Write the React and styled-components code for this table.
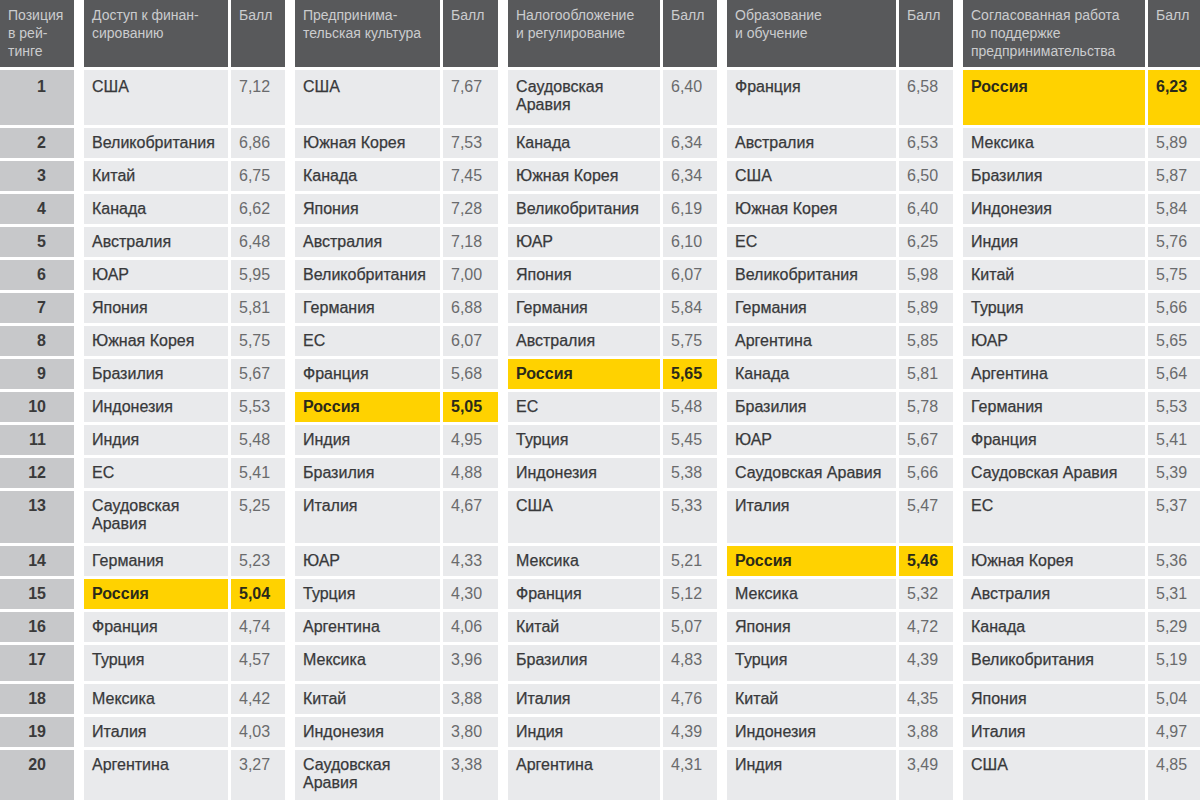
import React from "react";
import styled, { createGlobalStyle } from "styled-components";

const GlobalStyle = createGlobalStyle`
  html, body {
    margin: 0;
    padding: 0;
    background: #ffffff;
  }
  body {
    font-family: "Liberation Sans", Arial, sans-serif;
  }
`;

const groups = [
  {
    title: ["Доступ к финан-", "сированию"],
    rows: [
      ["США", "7,12"], ["Великобритания", "6,86"], ["Китай", "6,75"], ["Канада", "6,62"],
      ["Австралия", "6,48"], ["ЮАР", "5,95"], ["Япония", "5,81"], ["Южная Корея", "5,75"],
      ["Бразилия", "5,67"], ["Индонезия", "5,53"], ["Индия", "5,48"], ["ЕС", "5,41"],
      ["Саудовская Аравия", "5,25"], ["Германия", "5,23"], ["Россия", "5,04"], ["Франция", "4,74"],
      ["Турция", "4,57"], ["Мексика", "4,42"], ["Италия", "4,03"], ["Аргентина", "3,27"],
    ],
  },
  {
    title: ["Предпринима-", "тельская культура"],
    rows: [
      ["США", "7,67"], ["Южная Корея", "7,53"], ["Канада", "7,45"], ["Япония", "7,28"],
      ["Австралия", "7,18"], ["Великобритания", "7,00"], ["Германия", "6,88"], ["ЕС", "6,07"],
      ["Франция", "5,68"], ["Россия", "5,05"], ["Индия", "4,95"], ["Бразилия", "4,88"],
      ["Италия", "4,67"], ["ЮАР", "4,33"], ["Турция", "4,30"], ["Аргентина", "4,06"],
      ["Мексика", "3,96"], ["Китай", "3,88"], ["Индонезия", "3,80"], ["Саудовская Аравия", "3,38"],
    ],
  },
  {
    title: ["Налогообложение", "и регулирование"],
    rows: [
      ["Саудовская Аравия", "6,40"], ["Канада", "6,34"], ["Южная Корея", "6,34"], ["Великобритания", "6,19"],
      ["ЮАР", "6,10"], ["Япония", "6,07"], ["Германия", "5,84"], ["Австралия", "5,75"],
      ["Россия", "5,65"], ["ЕС", "5,48"], ["Турция", "5,45"], ["Индонезия", "5,38"],
      ["США", "5,33"], ["Мексика", "5,21"], ["Франция", "5,12"], ["Китай", "5,07"],
      ["Бразилия", "4,83"], ["Италия", "4,76"], ["Индия", "4,39"], ["Аргентина", "4,31"],
    ],
  },
  {
    title: ["Образование", "и обучение"],
    rows: [
      ["Франция", "6,58"], ["Австралия", "6,53"], ["США", "6,50"], ["Южная Корея", "6,40"],
      ["ЕС", "6,25"], ["Великобритания", "5,98"], ["Германия", "5,89"], ["Аргентина", "5,85"],
      ["Канада", "5,81"], ["Бразилия", "5,78"], ["ЮАР", "5,67"], ["Саудовская Аравия", "5,66"],
      ["Италия", "5,47"], ["Россия", "5,46"], ["Мексика", "5,32"], ["Япония", "4,72"],
      ["Турция", "4,39"], ["Китай", "4,35"], ["Индонезия", "3,88"], ["Индия", "3,49"],
    ],
  },
  {
    title: ["Согласованная работа", "по поддержке", "предпринимательства"],
    rows: [
      ["Россия", "6,23"], ["Мексика", "5,89"], ["Бразилия", "5,87"], ["Индонезия", "5,84"],
      ["Индия", "5,76"], ["Китай", "5,75"], ["Турция", "5,66"], ["ЮАР", "5,65"],
      ["Аргентина", "5,64"], ["Германия", "5,53"], ["Франция", "5,41"], ["Саудовская Аравия", "5,39"],
      ["ЕС", "5,37"], ["Южная Корея", "5,36"], ["Австралия", "5,31"], ["Канада", "5,29"],
      ["Великобритания", "5,19"], ["Япония", "5,04"], ["Италия", "4,97"], ["США", "4,85"],
    ],
  },
];

// row heights in px, header first
const rowHeights = [67, 55, 30, 30, 30, 30, 30, 30, 30, 30, 30, 30, 30, 52, 30, 30, 30, 36, 30, 30, 50];

const Table = styled.div`
  display: grid;
  width: 1200px;
  grid-template-columns: 74px 151px 54px 152px 55px 159px 54px 176px 54px 189px 52px;
  grid-template-rows: ${rowHeights.map((h) => h + "px").join(" ")};
  column-gap: 3px;
  row-gap: 3px;
  background: #ffffff;
`;

const HeadCell = styled.div`
  background: #58595b;
  color: #cbccce;
  font-size: 14px;
  line-height: 18px;
  padding: 6px 0 0 8px;
  margin-left: ${(p) => (p.$start ? "7px" : "0")};
  white-space: nowrap;
  overflow: hidden;
`;

const PosCell = styled.div`
  background: #c7c8ca;
  color: #3a3a3a;
  font-size: 16px;
  font-weight: bold;
  line-height: 18px;
  padding: ${(p) => (p.$first ? "8px" : "6px")} 28px 0 0;
  text-align: right;
`;

const Cell = styled.div`
  background: ${(p) => (p.$hl ? "#ffd200" : "#e9eaec")};
  color: ${(p) => (p.$hl ? "#2a2a1a" : p.$score ? "#6a6b6d" : "#38393b")};
  font-size: 16px;
  font-weight: ${(p) => (p.$hl ? "bold" : "normal")};
  -webkit-text-stroke: ${(p) => (p.$hl || p.$score ? "0" : "0.25px")};
  line-height: 18px;
  padding: ${(p) => (p.$first ? "8px" : "6px")} 4px 0 8px;
  margin-left: ${(p) => (p.$start ? "7px" : "0")};
`;

export default function App() {
  return (
    <>
      <GlobalStyle />
      <Table>
        <HeadCell>
          Позиция
          <br />в рей-
          <br />
          тинге
        </HeadCell>
        {groups.map((g, gi) => (
          <React.Fragment key={"h" + gi}>
            <HeadCell $start>
              {g.title.map((line, li) => (
                <React.Fragment key={li}>
                  {li > 0 && <br />}
                  {line}
                </React.Fragment>
              ))}
            </HeadCell>
            <HeadCell>Балл</HeadCell>
          </React.Fragment>
        ))}
        {Array.from({ length: 20 }, (_, ri) => (
          <React.Fragment key={"r" + ri}>
            <PosCell $first={ri === 0}>{ri + 1}</PosCell>
            {groups.map((g, gi) => {
              const [country, score] = g.rows[ri];
              const hl = country === "Россия";
              return (
                <React.Fragment key={gi}>
                  <Cell $start $hl={hl} $first={ri === 0}>
                    {country}
                  </Cell>
                  <Cell $score $hl={hl} $first={ri === 0}>
                    {score}
                  </Cell>
                </React.Fragment>
              );
            })}
          </React.Fragment>
        ))}
      </Table>
    </>
  );
}
